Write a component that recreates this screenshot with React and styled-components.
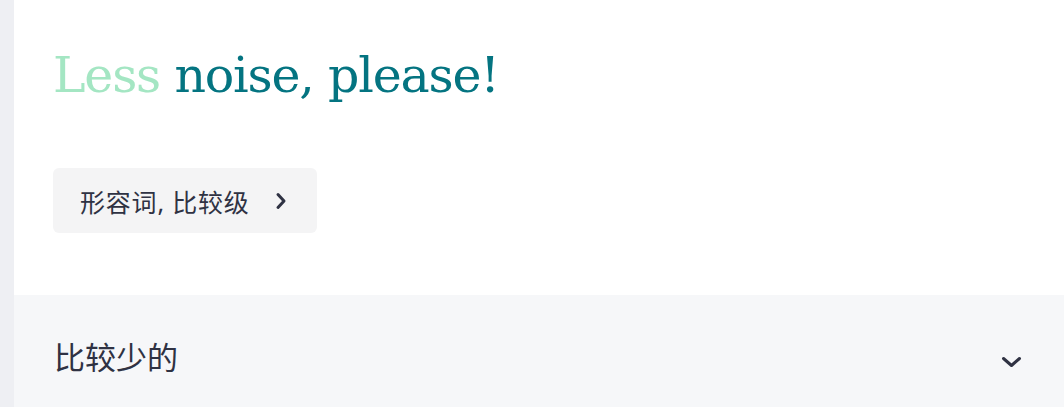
import React from "react";
import styled, { createGlobalStyle } from "styled-components";

const Global = createGlobalStyle`
  html, body { margin: 0; padding: 0; background: #eeeff3; }
  body { font-family: "Noto Sans", "Noto Sans CJK SC", sans-serif; }
`;

const Page = styled.div`
  display: flex;
  height: 407px;
  overflow: hidden;
`;

const Strip = styled.div`
  width: 14px;
  flex: none;
  background: #eeeff3;
`;

const Panel = styled.div`
  flex: 1;
  background: #ffffff;
  display: flex;
  flex-direction: column;
`;

const Top = styled.div`
  padding: 44px 40px 62px 39px;
  display: flex;
  flex-direction: column;
  align-items: flex-start;
`;

const Title = styled.h1`
  margin: 0;
  font-family: "DejaVu Serif", "Liberation Serif", serif;
  font-weight: 400;
  font-size: 49px;
  line-height: 64px;
  color: #047481;
  letter-spacing: -1.2px;
`;

const Light = styled.span`
  color: #a4e6c3;
`;

const Tag = styled.button`
  margin-top: 60px;
  display: flex;
  align-items: center;
  gap: 25px;
  height: 65px;
  padding: 0 30px 0 27px;
  border: none;
  border-radius: 6px;
  background: #f4f4f5;
  color: #2f3243;
  font-family: "Noto Sans", "Noto Sans CJK SC", sans-serif;
  font-size: 25px;
  letter-spacing: 0.8px;
  cursor: pointer;
`;

const Section = styled.div`
  flex: 1;
  background: #f6f7f9;
  display: flex;
  align-items: flex-start;
  justify-content: space-between;
  padding: 38px 42px 0 40px;
`;

const SectionTitle = styled.div`
  font-family: "Noto Sans", "Noto Sans CJK SC", sans-serif;
  font-size: 31px;
  line-height: 48px;
  color: #2f3243;
`;

const ChevronWrap = styled.div`
  display: flex;
  align-items: center;
  height: 48px;
  margin-top: 5px;
`;

const ChevronRight = () => (
  <svg width="12" height="18" viewBox="0 0 12 18" fill="none" stroke="#2f3243" strokeWidth="3" strokeLinecap="round" strokeLinejoin="round">
    <path d="M3 2.5l6 6.5-6 6.5" />
  </svg>
);

const ChevronDown = () => (
  <svg width="21" height="12" viewBox="0 0 21 12" fill="none" stroke="#2f3243" strokeWidth="3" strokeLinecap="round" strokeLinejoin="round">
    <path d="M2.5 2.5l8 7 8-7" />
  </svg>
);

export default function App() {
  return (
    <>
      <Global />
      <Page>
        <Strip />
        <Panel>
          <Top>
            <Title>
              <Light>Less</Light> noise, please!
            </Title>
            <Tag>
              形容词, 比较级
              <ChevronRight />
            </Tag>
          </Top>
          <Section>
            <SectionTitle>比较少的</SectionTitle>
            <ChevronWrap>
              <ChevronDown />
            </ChevronWrap>
          </Section>
        </Panel>
      </Page>
    </>
  );
}
